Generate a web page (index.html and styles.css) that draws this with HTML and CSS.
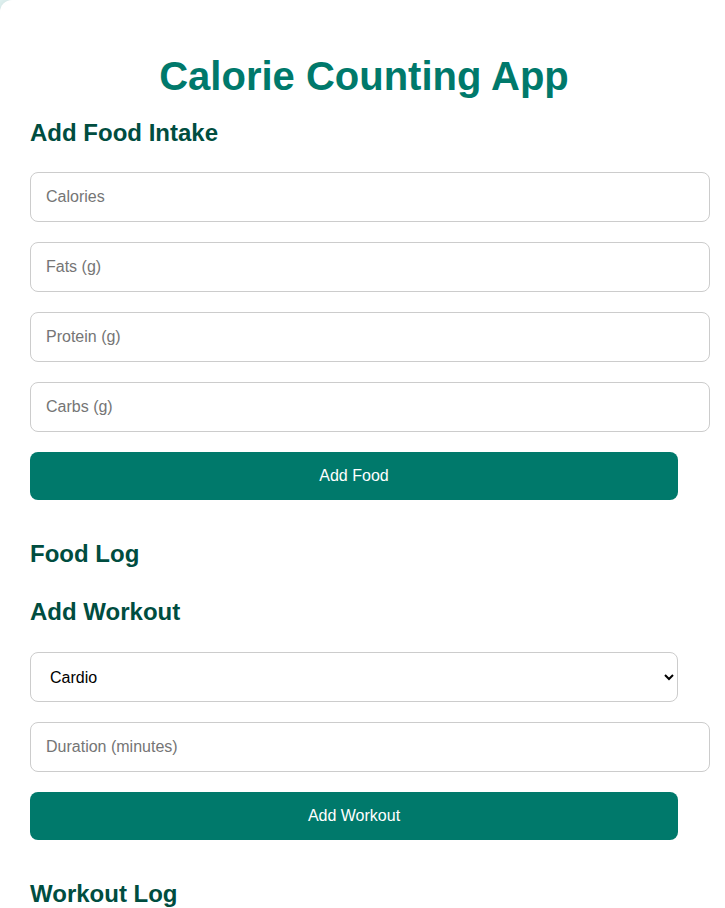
FILE: index.html
```html
<!DOCTYPE html>
<html lang="en">
<head>
<meta charset="utf-8">
<title>Calorie Counting App</title>
<link rel="stylesheet" href="styles.css">
</head>
<body>

<div class="container">
    <h1>Calorie Counting App</h1>

    <h2>Add Food Intake</h2>
    <input type="number" id="calories" placeholder="Calories">
    <input type="number" id="fats" placeholder="Fats (g)">
    <input type="number" id="protein" placeholder="Protein (g)">
    <input type="number" id="carbs" placeholder="Carbs (g)">
    <button id="addFood">Add Food</button>

    <h2 class="log-title">Food Log</h2>
    <ul id="foodLog" class="log"></ul>

    <h2 class="workout-title">Add Workout</h2>
    <select id="workoutType">
        <option value="cardio">Cardio</option>
        <option value="strength">Strength</option>
        <option value="yoga">Yoga</option>
    </select>
    <input type="number" id="duration" placeholder="Duration (minutes)">
    <button id="addWorkout">Add Workout</button>

    <h2 class="log-title last">Workout Log</h2>
    <ul id="workoutLog" class="log"></ul>
</div>

</body>
</html>
```

FILE: styles.css
```css
html, body {
    margin: 0;
    padding: 0;
    overflow: hidden;
}

body {
    background-color: #e0f2f1;
    font-family: "Liberation Sans", Arial, sans-serif;
}

.container {
    background-color: #fff;
    width: 668px;
    padding: 30px 60px 30px 30px;
    border-radius: 12px;
    box-shadow: 0 0 10px rgba(0, 0, 0, 0.08);
}

h1 {
    color: #00796b;
    font-size: 40px;
    text-align: center;
    margin: 24px 0 20px;
}

h2 {
    color: #004d40;
    font-size: 24px;
    margin: 0 0 25px;
}

.workout-title {
    margin-bottom: 26px;
}

.log-title {
    margin-bottom: 30px;
}

.log-title.last {
    margin-bottom: 0;
}

.log {
    list-style: none;
    margin: 0;
    padding: 0;
}

input, select, button {
    display: block;
    font-family: "Liberation Sans", Arial, sans-serif;
    font-size: 16px;
    line-height: 18px;
    margin: 0 0 20px;
}

input {
    width: 648px;
    height: 18px;
    padding: 15px;
    border: 1px solid #ccc;
    border-radius: 8px;
    color: #000;
    -moz-appearance: textfield;
}

input::-webkit-outer-spin-button,
input::-webkit-inner-spin-button {
    -webkit-appearance: none;
    margin: 0;
}

input::placeholder {
    color: #757575;
}

select {
    width: 648px;
    height: 50px;
    padding: 0 15px;
    border: 1px solid #ccc;
    border-radius: 8px;
    background-color: #fff;
    color: #000;
}

button {
    width: 648px;
    padding: 15px;
    border: none;
    border-radius: 8px;
    background-color: #00796b;
    color: #fff;
    cursor: pointer;
    margin-bottom: 40px;
}

button:hover {
    background-color: #00695c;
}
```
